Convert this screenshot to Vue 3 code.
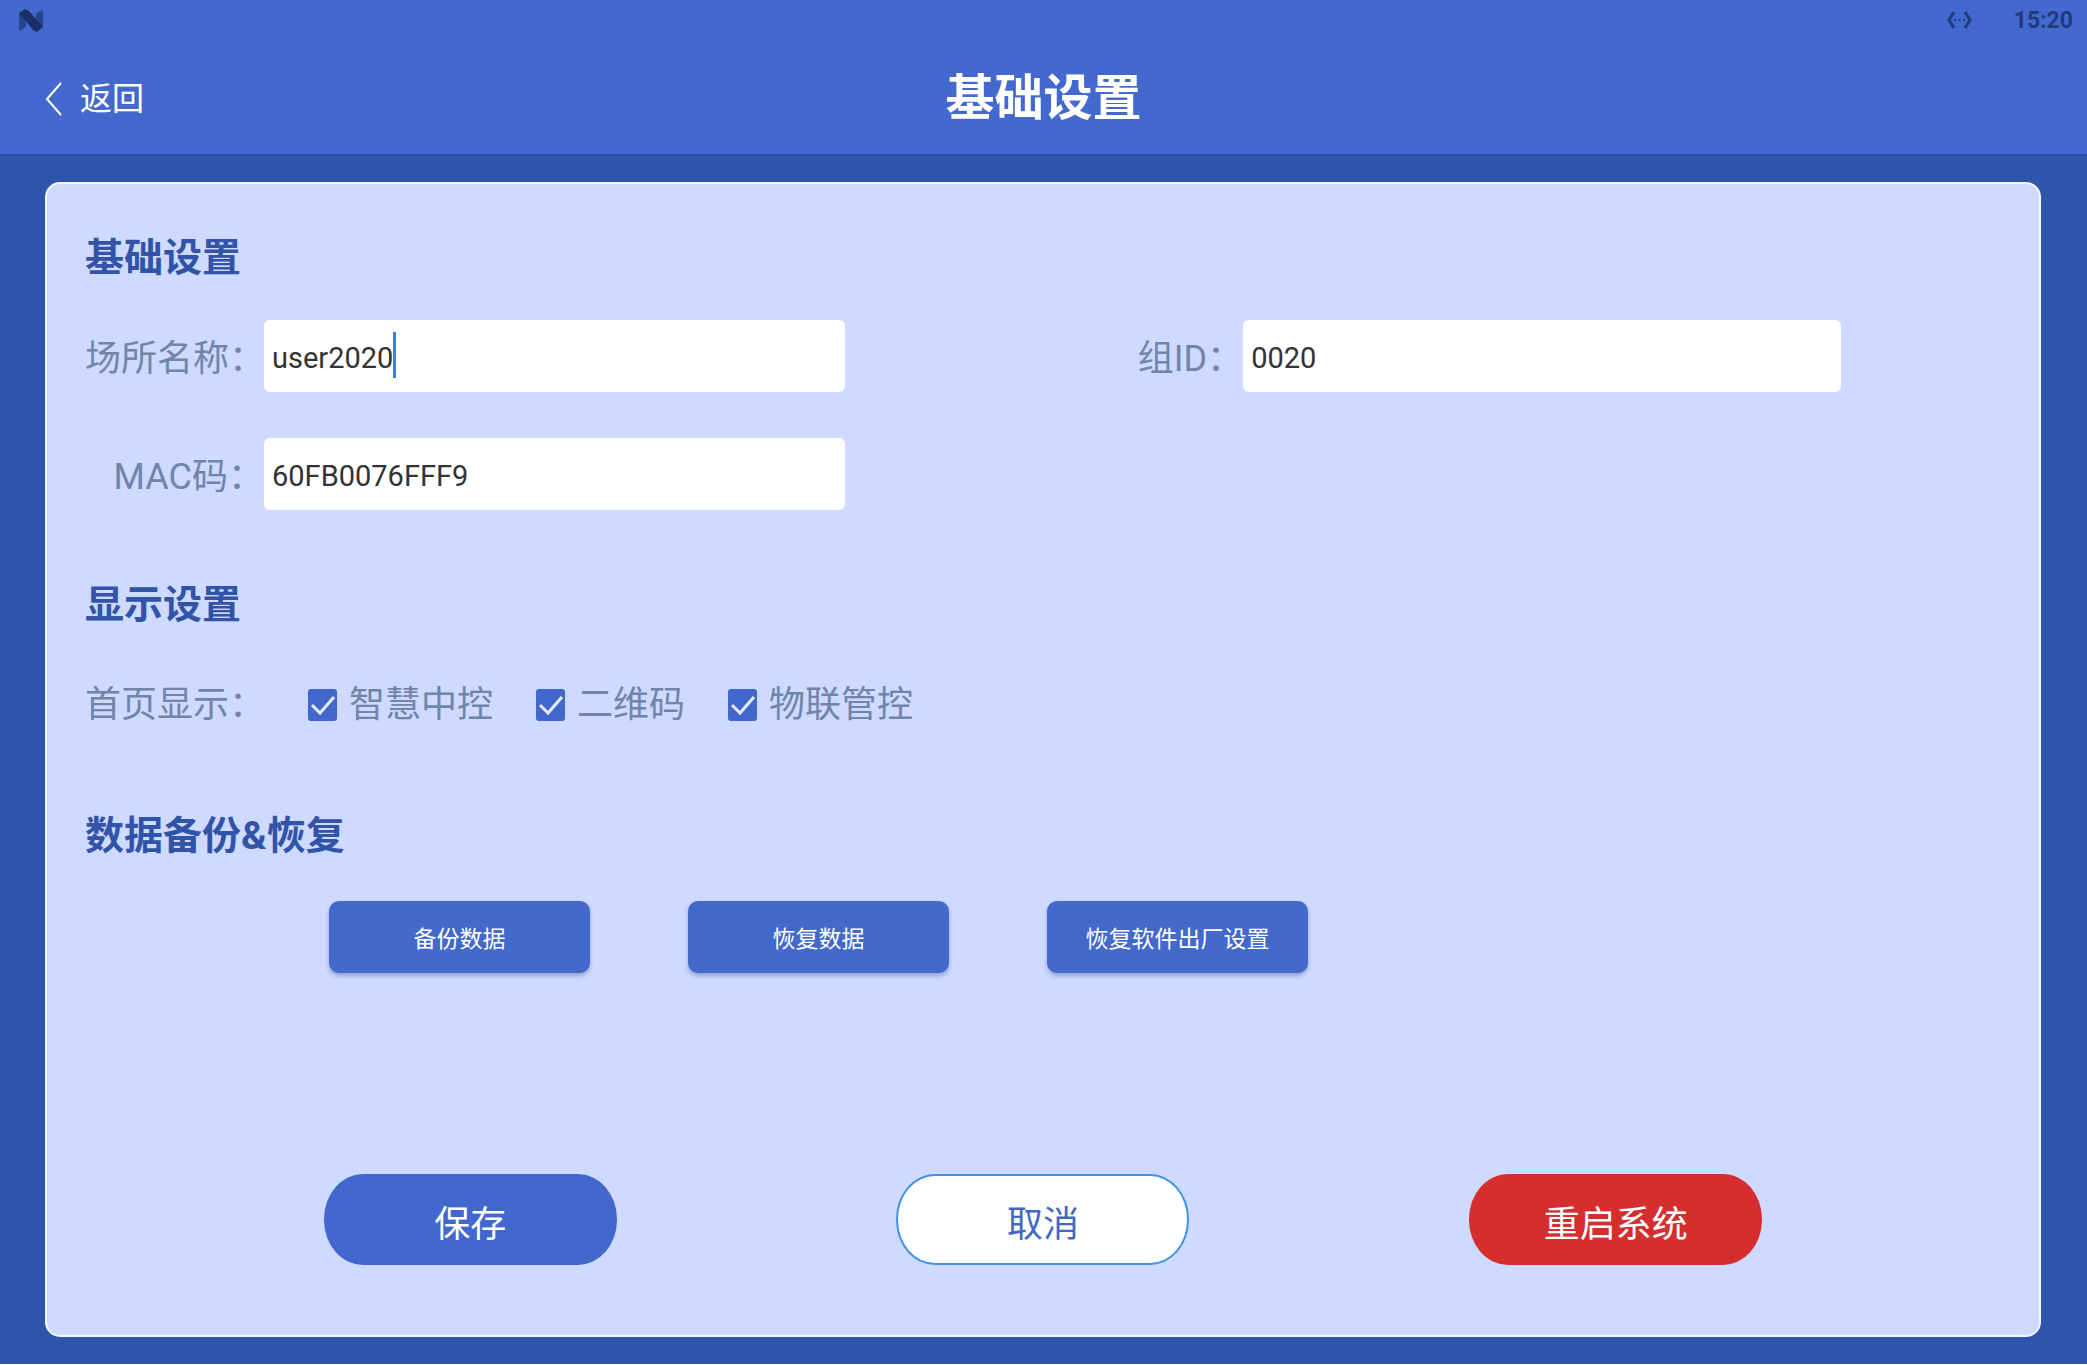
<script setup>
import { reactive } from 'vue'

const form = reactive({ place: 'user2020', group: '0020', mac: '60FB0076FFF9' })

const modules = reactive([
  { id: 'smart', label: '智慧中控', shown: true },
  { id: 'qrcode', label: '二维码', shown: true },
  { id: 'iot', label: '物联管控', shown: true },
])

const dataActions = ['备份数据', '恢复数据', '恢复软件出厂设置']
</script>

<template>
  <div class="page">
    <header class="header">
      <div class="status">
        <svg class="logo" viewBox="0 0 24 23" aria-hidden="true">
          <path d="M0 4 7 1v17l-7 4z" fill="#27458c" />
          <path d="M17 4l7-3v17l-7 4z" fill="#27458c" />
          <path d="M0 4 6 0 10 2 24 18 18 23 14 21z" fill="#1b2f66" />
        </svg>
        <div class="status-right">
          <svg class="ethernet" viewBox="0 0 25 18" aria-hidden="true">
            <path d="M7 1 2 9l5 8M18 1l5 8-5 8" fill="none" stroke="#203a7c" stroke-width="3" />
            <path d="M7 8h2v2H7zM11.500 8h2v2h-2zM16 8h2v2h-2z" fill="#203a7c" />
          </svg>
          <time>15:20</time>
        </div>
      </div>
      <div class="titlebar">
        <a class="back" href="#">
          <svg viewBox="0 0 18 34" aria-hidden="true">
            <path d="M16 1 2 17l14 16" fill="none" stroke="currentColor" stroke-width="2" />
          </svg>
          返回
        </a>
        <h1>基础设置</h1>
      </div>
    </header>

    <main class="main">
      <form class="card" @submit.prevent>
        <h2>基础设置</h2>
        <div class="fields">
          <label for="place">场所名称：</label>
          <div class="active-field">
            <input id="place" v-model="form.place" type="text" />
            <span class="caret"></span>
          </div>
          <label for="group">组ID：</label>
          <input id="group" v-model="form.group" type="text" />
          <label class="new-row" for="mac">MAC码：</label>
          <input id="mac" v-model="form.mac" type="text" />
        </div>

        <h2 class="display-title">显示设置</h2>
        <div class="modules" role="group" aria-labelledby="home-label">
          <span id="home-label" class="modules-label">首页显示：</span>
          <label v-for="m in modules" :key="m.id" class="check">
            <input v-model="m.shown" type="checkbox" />
            <svg viewBox="0 0 29 32" aria-hidden="true">
              <path d="M4 16l8 8L26 8" fill="none" stroke="#e4ebff" stroke-width="3" />
            </svg>
            <span>{{ m.label }}</span>
          </label>
        </div>

        <h2 class="data-title">数据备份&amp;恢复</h2>
        <div class="data-actions">
          <button v-for="name in dataActions" :key="name" type="button">{{ name }}</button>
        </div>

        <div class="actions">
          <button class="save" type="submit">保存</button>
          <button class="cancel" type="button">取消</button>
          <button class="restart" type="button">重启系统</button>
        </div>
      </form>
    </main>
  </div>
</template>

<style>
body {
  background: #fff;
}
</style>

<style scoped>
.page {
  box-sizing: border-box;
  display: flex;
  flex-direction: column;
  min-height: calc(100vh - 1px);
  background: #2f54ab;
  font-family: Roboto, "Noto Sans CJK SC", sans-serif;
}

.header {
  box-sizing: border-box;
  height: 155px;
  background: #4369ce;
  border-bottom: 1px solid #2c4c9e;
  color: #fff;
}

.status {
  display: flex;
  align-items: center;
  justify-content: space-between;
  height: 40px;
  padding: 0 14px 0 19px;
}

.logo {
  width: 24px;
  height: 23px;
}

.status-right {
  display: flex;
  align-items: center;
  gap: 42px;
  color: #203a7c;
  font-size: 23px;
  font-weight: 700;
}

.ethernet {
  width: 25px;
  height: 18px;
}

.titlebar {
  display: grid;
  grid-template-columns: 1fr auto 1fr;
  align-items: center;
  height: 114px;
  padding: 4px 45px 0;
  box-sizing: border-box;
}

.back {
  display: flex;
  align-items: center;
  gap: 17px;
  color: #fff;
  font-size: 32px;
  line-height: 48px;
  text-decoration: none;
}

.back svg {
  width: 18px;
  height: 34px;
}

h1 {
  margin: 0;
  font-size: 49px;
  font-weight: 700;
  line-height: 72px;
}

.main {
  display: flex;
  flex: 1;
  padding: 27px 46px 27px 45px;
}

.card {
  box-sizing: border-box;
  display: flex;
  flex: 1;
  flex-direction: column;
  padding: 50px 38px 70px;
  border: 2px solid #f3f7ff;
  border-radius: 15px;
  background: #cedaff;
  color: #7184aa;
  font-size: 36px;
  line-height: 48px;
}

h2 {
  margin: 0;
  color: #3153a8;
  font-size: 39px;
  font-weight: 700;
  line-height: 48px;
}

.fields {
  display: grid;
  grid-template-columns: 179px 580fr 398fr 597fr 160fr;
  row-gap: 46px;
  align-items: center;
  margin-top: 38px;
}

.fields label {
  padding-top: 6px;
  text-align: right;
  white-space: nowrap;
}

.fields .new-row {
  grid-column: 1;
}

.fields input {
  box-sizing: border-box;
  display: block;
  width: 100%;
  height: 72px;
  padding: 4px 8px 0;
  border: 0;
  border-radius: 6px;
  outline: 0;
  background: #fff;
  color: #333;
  font-family: inherit;
  font-size: 29px;
}

.active-field {
  position: relative;
}

.caret {
  position: absolute;
  top: 12px;
  left: 129px;
  width: 3px;
  height: 46px;
  background: #3b82dc;
}

.display-title {
  margin-top: 71px;
}

.modules {
  display: flex;
  align-items: center;
  gap: 43px;
  margin-top: 52px;
}

.modules-label {
  width: 180px;
  white-space: nowrap;
}

.check {
  position: relative;
  display: flex;
  align-items: center;
  gap: 12px;
}

.check input {
  width: 29px;
  height: 32px;
  margin: 0;
  border-radius: 3px;
  background: #fff;
  appearance: none;
}

.check input:checked {
  background: #4268ce;
}

.check svg {
  position: absolute;
  left: 0;
  width: 29px;
  height: 32px;
  pointer-events: none;
}

.check input:not(:checked) + svg {
  display: none;
}

.data-title {
  margin-top: 83px;
}

.data-actions {
  display: flex;
  gap: 98px;
  margin-top: 41px;
  padding-left: 244px;
}

button {
  padding: 0;
  border: 0;
  color: #fff;
  font-family: inherit;
  cursor: pointer;
}

.data-actions button {
  width: 261px;
  height: 72px;
  border-radius: 10px;
  background: #4369cd;
  box-shadow: 0 3px 4px rgba(60, 80, 140, 0.4);
  font-size: 23px;
}

.actions {
  display: grid;
  grid-template-columns: repeat(3, 1fr);
  justify-items: center;
  margin-top: auto;
  padding: 0 99px;
}

.actions button {
  width: 293px;
  height: 91px;
  padding-top: 2px;
  border-radius: 39px / 45px;
  font-size: 36px;
}

.actions .save {
  background: #4268ce;
}

.actions .cancel {
  border: 2px solid #4090ec;
  background: #fff;
  color: #4268c4;
}

.actions .restart {
  background: #d62d2e;
}
</style>
